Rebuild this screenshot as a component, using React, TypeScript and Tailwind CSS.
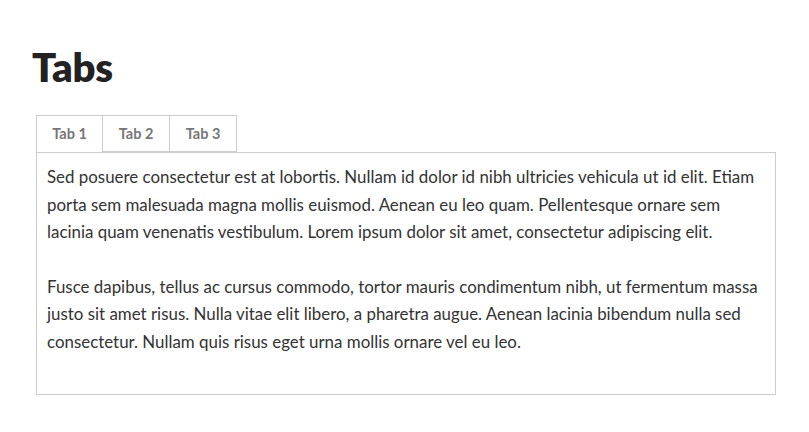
import { useState } from "react"

const tabs = ["Tab 1", "Tab 2", "Tab 3"]

const App = () => {
    const [active, setActive] = useState(0)
    return (
        <div className="bg-white min-h-screen w-full font-['Lato','Liberation_Sans',sans-serif] text-[#333]">
            <div className="pt-[45px] pl-[32px] pr-[33px]">
                <h1 className="text-[40px] font-extrabold leading-[44px] text-[#222] tracking-[-0.2px]">Tabs</h1>

                <div className="ml-[4px] mt-[26px]">
                    {/* Pestañas */}
                    <div className="flex">
                        {tabs.map((t, i) => (
                            <button
                                key={t}
                                onClick={() => setActive(i)}
                                className={
                                    "h-[37px] text-[14.5px] font-bold text-[#777] border-t border-l border-[#ccc] bg-white " +
                                    (i === 0 ? "w-[66px] " : i === 1 ? "w-[67px] " : "w-[68px] border-r ") +
                                    (i === active ? "-mb-px relative z-10" : "border-b")
                                }
                            >
                                {t}
                            </button>
                        ))}
                    </div>

                    {/* Contenido */}
                    <div className="border border-[#ccc] pt-[10px] px-[10px] pb-[12px] text-[16.9px] leading-[27.5px]">
                        <p className="mb-[27px]">
                            Sed posuere consectetur est at lobortis. Nullam id dolor id nibh ultricies vehicula ut id elit. Etiam porta sem malesuada magna mollis euismod. Aenean eu leo quam. Pellentesque ornare sem lacinia quam venenatis vestibulum. Lorem ipsum dolor sit amet, consectetur adipiscing elit.
                        </p>
                        <p className="mb-[27px]">
                            Fusce dapibus, tellus ac cursus commodo, tortor mauris condimentum nibh, ut fermentum massa justo sit amet risus. Nulla vitae elit libero, a pharetra augue. Aenean lacinia bibendum nulla sed consectetur. Nullam quis risus eget urna mollis ornare vel eu leo.
                        </p>
                    </div>
                </div>
            </div>
        </div>
    )
}

export default App
